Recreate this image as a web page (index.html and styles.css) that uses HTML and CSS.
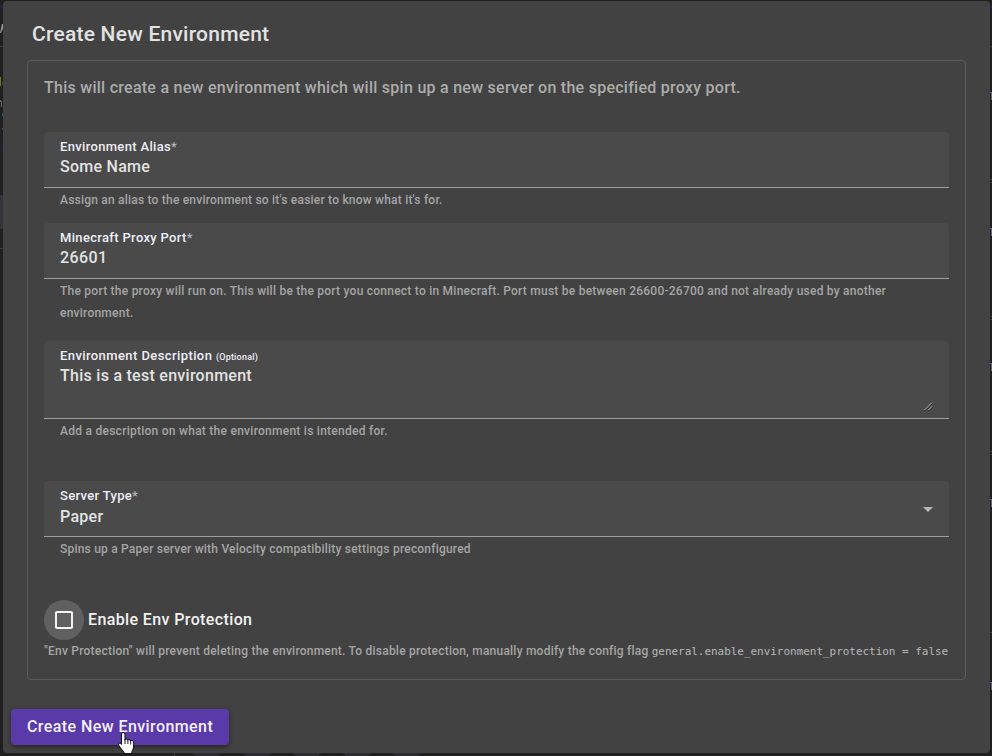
FILE: index.html
```html
<!DOCTYPE html>
<html lang="en">
<head>
<meta charset="utf-8">
<title>Create New Environment</title>
<link rel="stylesheet" href="styles.css">
</head>
<body>
<svg class="backdrop" width="992" height="756" aria-hidden="true">
  <path fill="#2b1a63" d="M0 6h3v2H0zM990 6h2v2h-2z"/>
  <path fill="#3a3a3a" d="M0 46h3v1H0zM990 46h2v1h-2zM990 179h2v1h-2zM990 182h2v1h-2zM990 316h2v1h-2zM990 319h2v1h-2zM990 451h2v1h-2zM990 454h2v1h-2zM990 632h2v1h-2zM0 248h3v1H0zM174 753h1v3h-1z"/>
  <path fill="#9a9a9a" d="M0 33l2-9h1v4l-2 5z"/>
  <path fill="#8a6d16" d="M0 77h1v9H0z"/>
  <path fill="#1b5278" d="M2 82h1v3H2zM2 113h1v3H2zM2 128h1v2H2z"/>
  <path fill="#5b6a6c" d="M0 100h1v1h1v6H1v-5H0z"/>
  <path fill="#22205c" d="M2 143h1v9H2z"/>
  <path fill="#34343d" d="M0 195h3v34H0z"/>
  <path fill="#6a6585" d="M990 92h2v8h-1v-7h-1zM990 228h2v8h-1v-7h-1zM990 363h2v8h-1v-7h-1zM990 499h2v8h-1v-7h-1zM990 682h2v8h-1v-7h-1z"/>
  <path fill="#2d2d32" d="M192 753h30l-4 3h-22zM242 753h30l-4 3h-22zM292 753h30l-4 3h-22zM342 753h30l-4 3h-22zM392 753h30l-4 3h-22z"/>
</svg>
<main class="dialog">
  <h1 class="title">Create New Environment</h1>
  <section class="panel">
    <p class="intro">This will create a new environment which will spin up a new server on the specified proxy port.</p>
    <div class="field">
      <label class="label">Environment Alias<span class="star">*</span></label>
      <div class="value">Some Name</div>
    </div>
    <p class="help">Assign an alias to the environment so it's easier to know what it's for.</p>
    <div class="field">
      <label class="label">Minecraft Proxy Port<span class="star">*</span></label>
      <div class="value number">26601</div>
    </div>
    <p class="help port">The port the proxy will run on. This will be the port you connect to in Minecraft. Port must be between 26600-26700 and not already used by another<br>environment.</p>
    <div class="field area">
      <label class="label wide">Environment Description <span class="optional">(Optional)</span></label>
      <div class="value">This is a test environment</div>
      <svg class="grip" width="9" height="9" viewBox="0 0 9 9"><path d="M1 8.5L8.5 1M5 8.5L8.5 5" stroke="#1f1f1f"/><path d="M.5 8L8 .5M4.5 8L8 4.5" stroke="#d0d0d0" stroke-width=".8"/></svg>
    </div>
    <p class="help description">Add a description on what the environment is intended for.</p>
    <div class="field select">
      <label class="label">Server Type<span class="star">*</span></label>
      <div class="value">Paper</div>
      <svg class="arrow" width="10" height="5" viewBox="0 0 10 5"><path d="M0 0h10L5 5z" fill="#b5b5b5"/></svg>
    </div>
    <p class="help server">Spins up a Paper server with Velocity compatibility settings preconfigured</p>
    <div class="check"><span class="ripple"><span class="box"></span></span><span class="check-label">Enable Env Protection</span></div>
    <p class="note">"Env Protection" will prevent deleting the environment. To disable protection, manually modify the config flag <code>general.enable_environment_protection = false</code></p>
  </section>
  <button class="submit">Create New Environment</button>
</main>
<svg class="cursor" width="19" height="24" viewBox="0 0 19 24"><path d="M6.200 1.500c1.200 0 1.800.8 1.800 1.900v5c.8-.8 2.500-.5 2.900.5.9-.7 2.300-.3 2.700.7 1.300-.6 3 .1 3 1.700v4.200c0 2.300-.8 3.800-1.800 5.500v1.500H7v-1.200c-1.800-1.600-3-3.700-4.500-5.700-.9-1.200-1.600-2.100-.9-3 .9-1 2-.5 2.900.4V3.400c0-1.100.6-1.900 1.700-1.900z" fill="#fff" stroke="#15151c" stroke-width="1.100"/><path d="M8 8v5M10.900 9v4M13.700 10v3.500" stroke="#15151c" fill="none"/></svg>
</body>
</html>
```
FILE: styles.css
```css
* { box-sizing: border-box; }
body {
  margin: 0;
  width: 992px;
  height: 756px;
  overflow: hidden;
  background: #202020;
  font-family: Roboto, "Liberation Sans", sans-serif;
  font-weight: 500;
  padding: 1px 2px 3px 3px;
}
h1, p { margin: 0; font-weight: inherit; }
.backdrop { position: absolute; left: 0; top: 0; }
.dialog {
  position: relative;
  width: 987px;
  height: 752px;
  padding: 0 24px;
  border-radius: 4px;
  background: #424242;
}
.title { height: 59px; padding: 17px 0 0 5px; font-size: 21px; line-height: 32px; letter-spacing: .23px; color: #e2e2e2; }
.panel {
  width: 939px;
  height: 620px;
  border: 1px solid #5b5b5b;
  border-radius: 4px;
  padding: 15px 16px;
}
.intro { height: 56px; font-size: 16px; line-height: 24px; letter-spacing: .265px; color: #acacac; white-space: nowrap; }
.field {
  position: relative;
  height: 56px;
  padding: 5px 16px 0;
  background: #4a4a4a;
  border-bottom: 1px solid #9f9f9f;
  border-radius: 4px 4px 0 0;
}
.label { display: block; height: 19px; font-size: 13px; line-height: 20px; letter-spacing: .33px; color: #eeeef8; white-space: nowrap; }
.wide { letter-spacing: .41px; }
.star { color: #b5b5b8; }
.optional { font-size: 9px; letter-spacing: .2px; }
.value { font-size: 16px; line-height: 22px; letter-spacing: .27px; color: #e3e3e3; }
.number { letter-spacing: .4px; }
.select .value { padding-top: 1px; }
.help { height: 35px; padding: 1px 16px 0; font-size: 12px; line-height: 22px; letter-spacing: .21px; color: #a5a5a5; white-space: nowrap; }
.port { height: 62px; letter-spacing: .239px; }
.area { height: 78px; }
.description { height: 62px; letter-spacing: .26px; }
.server { height: 63px; }
.grip { position: absolute; right: 16px; bottom: 7px; }
.arrow { position: absolute; right: 16px; top: 26px; }
.check { display: flex; align-items: center; gap: 4px; height: 40px; font-size: 16px; letter-spacing: .38px; color: #f2f2f2; }
.check-label { padding-bottom: 2px; }
.ripple { display: flex; align-items: center; justify-content: center; width: 40px; height: 40px; border-radius: 50%; background: #606060; }
.box { width: 18px; height: 18px; border: 2px solid #f4f4f4; border-radius: 2px; }
.note { font-size: 12px; line-height: 22px; letter-spacing: .223px; color: #a5a5a5; white-space: nowrap; }
code { font: 11px/22px "DejaVu Sans Mono", monospace; letter-spacing: -.035px; color: #b8b8b8; }
.submit {
  display: block;
  width: 218px;
  height: 36px;
  margin: 29px 0 0 -16px;
  padding: 0 0 0 16px;
  border: 0;
  border-radius: 4px;
  background: #5a3aa9;
  box-shadow: 0 2px 4px rgba(0, 0, 0, .45);
  color: #f3f0fa;
  font: 500 16px/36px Roboto, sans-serif;
  letter-spacing: .42px;
  text-align: left;
  white-space: nowrap;
}
.cursor { position: absolute; left: 117px; top: 731px; }
```
